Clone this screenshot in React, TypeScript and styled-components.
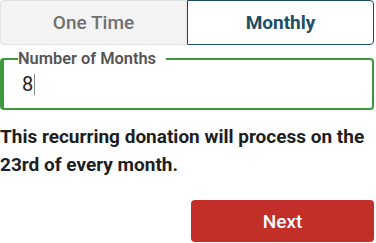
import styled, { createGlobalStyle } from "styled-components";

const GlobalStyle = createGlobalStyle`
  html, body {
    margin: 0;
    padding: 0;
    background: #fff;
  }
  body {
    font-family: Roboto, "Liberation Sans", sans-serif;
  }
`;

function App() {
  return (
    <>
      <GlobalStyle />
      <Wrapper>
        <Toggle>
          <Segment>One Time</Segment>
          <Segment $active>Monthly</Segment>
        </Toggle>
        <Field>
          <Legend>Number of Months</Legend>
          <Value>
            8<Caret />
          </Value>
        </Field>
        <Note>This recurring donation will process on the 23rd of every month.</Note>
        <Actions>
          <NextButton>Next</NextButton>
        </Actions>
      </Wrapper>
    </>
  );
}

export default App;

const Wrapper = styled.div`
  width: 374px;
  display: flex;
  flex-direction: column;
`;

const Toggle = styled.div`
  display: grid;
  grid-template-columns: 1fr 1fr;
  height: 45px;
`;

const Segment = styled.button<{ $active?: boolean }>`
  font-family: inherit;
  font-size: 19px;
  font-weight: ${(p) => (p.$active ? 700 : 500)};
  color: ${(p) => (p.$active ? "#1c4f66" : "#707070")};
  background: ${(p) => (p.$active ? "#fff" : "#f3f3f3")};
  border: 1px solid ${(p) => (p.$active ? "#1c4f66" : "#e2e2e2")};
  border-radius: ${(p) => (p.$active ? "0 4px 4px 0" : "4px 0 0 4px")};
  padding: 0;
  cursor: pointer;
`;

const Field = styled.fieldset`
  margin: 5px 0 0;
  height: 60px;
  box-sizing: border-box;
  border: 2px solid #3b9a3b;
  border-left-width: 4px;
  border-radius: 4px;
  padding: 0 18px;
  display: flex;
  align-items: center;
`;

const Legend = styled.legend`
  font-size: 16.4px;
  font-weight: 600;
  color: #555;
  padding: 0 10px 0 0;
  margin-left: -4px;
  line-height: 18px;
`;

const Value = styled.div`
  font-size: 20px;
  color: #222;
  display: flex;
  align-items: center;
  margin-top: 4px;
`;

const Caret = styled.span`
  display: inline-block;
  width: 1px;
  height: 21px;
  background: #888;
  margin-left: 1px;
`;

const Note = styled.p`
  margin: 13px 0 0;
  font-size: 19px;
  font-weight: 700;
  line-height: 28px;
  color: #1e1e1e;
`;

const Actions = styled.div`
  display: flex;
  justify-content: flex-end;
  margin-top: 21px;
`;

const NextButton = styled.button`
  width: 183px;
  height: 42px;
  border: none;
  border-radius: 4px;
  background: #c12f28;
  color: #fff;
  font-family: inherit;
  font-size: 19px;
  font-weight: 500;
  cursor: pointer;
`;
